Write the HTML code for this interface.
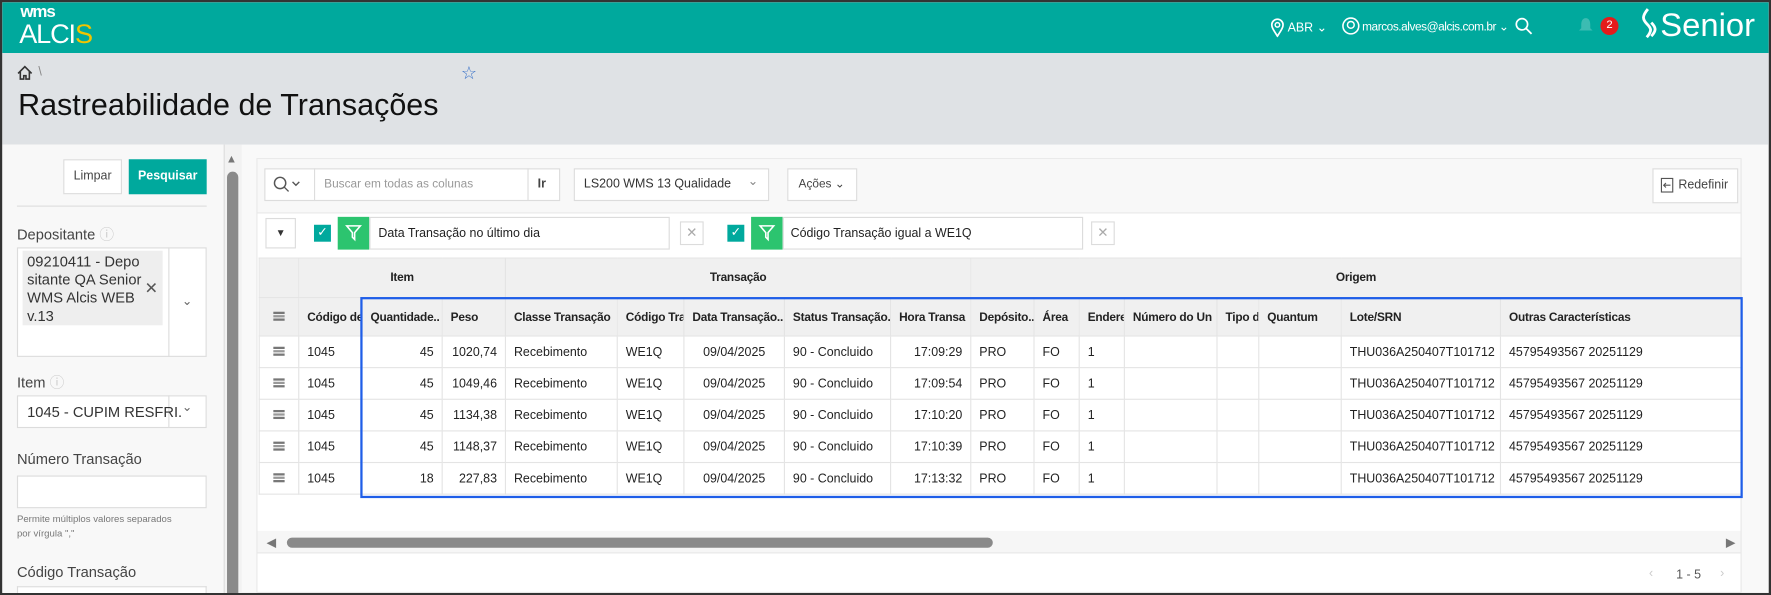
<!DOCTYPE html>
<html><head><meta charset="utf-8"><style>
*{box-sizing:border-box;margin:0;padding:0}
html,body{width:1771px;height:595px;overflow:hidden}
body{font-family:"Liberation Sans",sans-serif;background:#333;position:relative}
#sc{position:absolute;left:0;top:0;width:1568px;height:527px;transform:scale(1.12946);transform-origin:0 0;background:#333;overflow:hidden}
.a{position:absolute}
#pg{position:absolute;left:2px;top:2px;width:1564px;height:523px;background:#f9f9f9;overflow:hidden}
.hdr{left:0;top:0;width:1564px;height:45px;background:#00a99d}
.bc{left:0;top:45px;width:1564px;height:81px;background:#dfe2e5}
.lp{left:0;top:126px;width:210px;height:397px;background:#f8f8f8}
.t{font-size:11px;color:#222;white-space:nowrap}
.box{border:1px solid #dcdcdc;background:#fff}
table{border-collapse:collapse;position:absolute;left:227px;top:226px;width:1312px;table-layout:fixed;font-size:11px;color:#222}
td,th{border:1px solid #e4e4e4;height:28px;padding:0 7px;white-space:nowrap;overflow:hidden;text-align:left}
th{background:#f0f0f0;font-weight:bold;height:34px;font-size:10.5px;letter-spacing:-.2px}
tr.g th{text-align:center;height:35px}
td.r{text-align:right}td.c{text-align:center}
.mn{display:inline-block;width:10px;height:8px;border-top:2px solid #777;border-bottom:2px solid #777;position:relative}
.mn:after{content:"";position:absolute;left:0;right:0;top:1px;border-top:2px solid #999}
</style></head><body><div id="sc"><div id="pg">
<div class="a hdr"></div>
<div class="a" style="left:16px;top:0px;color:#fff;font-size:15px;font-weight:bold;letter-spacing:-1px">wms</div>
<div class="a" style="left:15px;top:15px;color:#fff;font-size:24px;letter-spacing:-1px">ALCI<span style="color:#f2c400">S</span></div>
<svg class="a" style="left:1122px;top:13px" width="14" height="18" viewBox="0 0 14 18"><path d="M7 17C3 11 2 9 2 7a5 5 0 0 1 10 0c0 2-1 4-5 10z" fill="none" stroke="#fff" stroke-width="1.5"/><circle cx="7" cy="7" r="2" fill="none" stroke="#fff" stroke-width="1.3"/></svg>
<div class="a t" style="left:1138px;top:16px;color:#fff;font-size:11px">ABR ⌄</div>
<svg class="a" style="left:1186px;top:13px" width="16" height="16" viewBox="0 0 16 16"><circle cx="8" cy="8" r="7" fill="none" stroke="#fff" stroke-width="1.4"/><circle cx="8" cy="7" r="3" fill="none" stroke="#fff" stroke-width="1.3"/></svg>
<div class="a t" style="left:1204px;top:16px;color:#fff;font-size:10.5px;letter-spacing:-.4px">marcos.alves@alcis.com.br ⌄</div>
<svg class="a" style="left:1339px;top:13px" width="16" height="16" viewBox="0 0 16 16"><circle cx="6.5" cy="6.5" r="5" fill="none" stroke="#fff" stroke-width="1.5"/><path d="M10 10l5 5" stroke="#fff" stroke-width="1.6"/></svg>
<svg class="a" style="left:1396px;top:13px" width="12" height="16" viewBox="0 0 12 16"><path d="M6 1c3 0 4 3 4 6v3l2 2H0l2-2V7c0-3 1-6 4-6zM4 14h4" fill="#3cbcb2"/></svg>
<div class="a" style="left:1415px;top:13px;width:16px;height:16px;border-radius:8px;background:#e41b1b;color:#fff;font-size:10px;text-align:center;line-height:16px">2</div>
<svg class="a" style="left:1448px;top:4px" width="20" height="40" viewBox="0 0 20 40"><path d="M9 2C4 8 4 11 8 15c4 4 5 6 0 12" fill="none" stroke="#fff" stroke-width="2.5"/><path d="M12 14c4 4 5 7 0 12" fill="none" stroke="#fff" stroke-width="2.5"/></svg>
<div class="a" style="left:1468px;top:5px;color:#fff;font-size:29px">Senior</div>
<div class="a bc"></div>
<svg class="a" style="left:13px;top:56px" width="14" height="13" viewBox="0 0 14 13"><path d="M1 7L7 1l6 6M3 5v7h3V9h2v3h3V5" fill="none" stroke="#333" stroke-width="1.4"/></svg>
<div class="a t" style="left:32px;top:56px;color:#888">\</div>
<div class="a" style="left:406px;top:53px;color:#3b73c9;font-size:16px">☆</div>
<div class="a" style="left:14px;top:76px;font-size:27px;color:#111">Rastreabilidade de Transações</div>
<div class="a lp"></div>
<div class="a box t" style="left:54px;top:139px;width:52px;height:31px;line-height:29px;text-align:center;color:#444">Limpar</div>
<div class="a t" style="left:112px;top:139px;width:69px;height:31px;line-height:31px;text-align:center;color:#fff;background:#00a99d;font-weight:bold">Pesquisar</div>
<div class="a" style="left:13px;top:180px;width:168px;border-top:1px solid #ddd"></div>
<div class="a t" style="left:13px;top:195px;font-size:13px;color:#444">Depositante <span style="color:#ccc">ⓘ</span></div>
<div class="a box" style="left:13px;top:217px;width:168px;height:97px"></div>
<div class="a" style="left:18px;top:220px;width:124px;height:66px;background:#eee"></div>
<div class="a" style="left:147px;top:217px;border-left:1px solid #ddd;height:97px"></div>
<div class="a" style="left:22px;top:222px;font-size:13px;color:#333;line-height:16px">09210411 - Depo<br>sitante QA Senior<br>WMS Alcis WEB<br>v.13</div>
<div class="a t" style="left:126px;top:245px;font-size:14px;color:#555">✕</div>
<div class="a t" style="left:159px;top:258px;color:#666">⌄</div>
<div class="a t" style="left:13px;top:326px;font-size:13px;color:#444">Item <span style="color:#ccc">ⓘ</span></div>
<div class="a box" style="left:13px;top:348px;width:168px;height:29px"></div>
<div class="a" style="left:147px;top:348px;border-left:1px solid #ddd;height:29px"></div>
<div class="a t" style="left:22px;top:355px;font-size:13px;color:#333">1045 - CUPIM RESFRI.</div>
<div class="a t" style="left:159px;top:352px;color:#666">⌄</div>
<div class="a t" style="left:13px;top:397px;font-size:13px;color:#444">Número Transação</div>
<div class="a box" style="left:13px;top:419px;width:168px;height:29px"></div>
<div class="a" style="left:13px;top:451px;font-size:8.5px;color:#777;line-height:13px">Permite múltiplos valores separados<br>por vírgula ","</div>
<div class="a t" style="left:13px;top:497px;font-size:13px;color:#444">Código Transação</div>
<div class="a box" style="left:13px;top:517px;width:168px;height:6px;border-bottom:none"></div>
<div class="a" style="left:196px;top:126px;width:16px;height:397px;background:#f2f2f2;border-left:1px solid #ddd"></div>
<div class="a" style="left:198px;top:134px;color:#777;font-size:10px">▲</div>
<div class="a" style="left:199px;top:150px;width:10px;height:373px;background:#8a8a8a;border-radius:5px 5px 0 0"></div>
<div class="a" style="left:225px;top:138px;width:1315px;height:385px;background:#fff;border:1px solid #e8e8e8"></div>
<div class="a" style="left:226px;top:139px;width:1313px;height:48px;background:#f8f8f8;border-bottom:1px solid #e8e8e8"></div>
<div class="a box" style="left:232px;top:147px;width:262px;height:29px"></div>
<div class="a" style="left:276px;top:147px;border-left:1px solid #ddd;height:29px"></div>
<div class="a" style="left:465px;top:147px;border-left:1px solid #ddd;height:29px"></div>
<svg class="a" style="left:239px;top:153px" width="28" height="16" viewBox="0 0 28 16"><circle cx="7" cy="7" r="5" fill="none" stroke="#555" stroke-width="1.3"/><path d="M10.5 10.5l4 4M18 6l3 3 3-3" fill="none" stroke="#555" stroke-width="1.2"/></svg>
<div class="a t" style="left:285px;top:155px;color:#999;font-size:10.5px">Buscar em todas as colunas</div>
<div class="a t" style="left:474px;top:155px;font-weight:bold;color:#444">Ir</div>
<div class="a box" style="left:506px;top:147px;width:173px;height:29px"></div>
<div class="a t" style="left:515px;top:155px;color:#333">LS200 WMS 13 Qualidade</div>
<div class="a t" style="left:660px;top:152px;color:#888">⌄</div>
<div class="a box t" style="left:695px;top:147px;width:62px;height:29px;line-height:27px;padding-left:9px;color:#444;font-size:10.5px">Ações ⌄</div>
<div class="a box t" style="left:1461px;top:147px;width:76px;height:31px;line-height:29px;padding-left:22px;color:#444">Redefinir</div>
<svg class="a" style="left:1468px;top:155px" width="12" height="14" viewBox="0 0 12 14"><rect x="1" y="1" width="10" height="12" fill="none" stroke="#555"/><path d="M9 7H3M5 5L3 7l2 2" fill="none" stroke="#555"/></svg>
<div class="a box" style="left:233px;top:191px;width:27px;height:27px;text-align:center;line-height:25px;font-size:9px;color:#333">▼</div>
<div class="a" style="left:276px;top:197px;width:15px;height:15px;background:#00a99d;color:#fff;font-size:11px;text-align:center;line-height:15px">✓</div>
<div class="a" style="left:297px;top:190px;width:28px;height:29px;background:#2cc46f"></div>
<svg class="a" style="left:303px;top:196px" width="16" height="16" viewBox="0 0 16 16"><path d="M2 2h12l-5 6v6l-2-2V8z" fill="none" stroke="#fff" stroke-width="1.4"/></svg>
<div class="a box" style="left:325px;top:190px;width:266px;height:29px"></div>
<div class="a t" style="left:333px;top:199px">Data Transação no último dia</div>
<div class="a box t" style="left:600px;top:194px;width:21px;height:21px;line-height:19px;text-align:center;color:#aaa;font-size:12px">✕</div>
<div class="a" style="left:642px;top:197px;width:15px;height:15px;background:#00a99d;color:#fff;font-size:11px;text-align:center;line-height:15px">✓</div>
<div class="a" style="left:663px;top:190px;width:28px;height:29px;background:#2cc46f"></div>
<svg class="a" style="left:669px;top:196px" width="16" height="16" viewBox="0 0 16 16"><path d="M2 2h12l-5 6v6l-2-2V8z" fill="none" stroke="#fff" stroke-width="1.4"/></svg>
<div class="a box" style="left:691px;top:190px;width:266px;height:29px"></div>
<div class="a t" style="left:698px;top:199px">Código Transação igual a WE1Q</div>
<div class="a box t" style="left:964px;top:194px;width:21px;height:21px;line-height:19px;text-align:center;color:#aaa;font-size:12px">✕</div>
<table>
<colgroup><col style="width:35px"><col style="width:56px"><col style="width:71px"><col style="width:56px"><col style="width:99px"><col style="width:59px"><col style="width:89px"><col style="width:94px"><col style="width:71px"><col style="width:56px"><col style="width:40px"><col style="width:40px"><col style="width:82px"><col style="width:37px"><col style="width:73px"><col style="width:141px"><col style="width:213px"></colgroup>
<tr class="g"><th></th><th colspan="3">Item</th><th colspan="5">Transação</th><th colspan="8">Origem</th></tr>
<tr><th style="text-align:center"><span class="mn"></span></th><th>Código de</th><th>Quantidade..</th><th>Peso</th><th>Classe Transação</th><th>Código Tra</th><th>Data Transação..</th><th>Status Transação.</th><th>Hora Transa</th><th>Depósito..</th><th>Área</th><th>Endere</th><th>Número do Un</th><th>Tipo d</th><th>Quantum</th><th>Lote/SRN</th><th>Outras Características</th></tr>
<tr><td class="c"><span class="mn"></span></td><td>1045</td><td class="r">45</td><td class="r">1020,74</td><td>Recebimento</td><td>WE1Q</td><td class="c">09/04/2025</td><td>90 - Concluido</td><td class="r">17:09:29</td><td>PRO</td><td>FO</td><td>1</td><td></td><td></td><td></td><td>THU036A250407T101712</td><td>45795493567 20251129</td></tr>
<tr><td class="c"><span class="mn"></span></td><td>1045</td><td class="r">45</td><td class="r">1049,46</td><td>Recebimento</td><td>WE1Q</td><td class="c">09/04/2025</td><td>90 - Concluido</td><td class="r">17:09:54</td><td>PRO</td><td>FO</td><td>1</td><td></td><td></td><td></td><td>THU036A250407T101712</td><td>45795493567 20251129</td></tr>
<tr><td class="c"><span class="mn"></span></td><td>1045</td><td class="r">45</td><td class="r">1134,38</td><td>Recebimento</td><td>WE1Q</td><td class="c">09/04/2025</td><td>90 - Concluido</td><td class="r">17:10:20</td><td>PRO</td><td>FO</td><td>1</td><td></td><td></td><td></td><td>THU036A250407T101712</td><td>45795493567 20251129</td></tr>
<tr><td class="c"><span class="mn"></span></td><td>1045</td><td class="r">45</td><td class="r">1148,37</td><td>Recebimento</td><td>WE1Q</td><td class="c">09/04/2025</td><td>90 - Concluido</td><td class="r">17:10:39</td><td>PRO</td><td>FO</td><td>1</td><td></td><td></td><td></td><td>THU036A250407T101712</td><td>45795493567 20251129</td></tr>
<tr><td class="c"><span class="mn"></span></td><td>1045</td><td class="r">18</td><td class="r">227,83</td><td>Recebimento</td><td>WE1Q</td><td class="c">09/04/2025</td><td>90 - Concluido</td><td class="r">17:13:32</td><td>PRO</td><td>FO</td><td>1</td><td></td><td></td><td></td><td>THU036A250407T101712</td><td>45795493567 20251129</td></tr>
</table>
<div class="a" style="left:317px;top:261px;width:1224px;height:178px;border:2px solid #1f5ee8"></div>
<div class="a" style="left:226px;top:468px;width:1313px;height:20px;background:#f6f6f6;border-bottom:1px solid #e8e8e8"></div>
<div class="a" style="left:234px;top:472px;color:#777;font-size:11px">◀</div>
<div class="a" style="left:252px;top:474px;width:625px;height:9px;background:#8a8a8a;border-radius:5px"></div>
<div class="a" style="left:1526px;top:472px;color:#777;font-size:11px">▶</div>
<div class="a t" style="left:1458px;top:500px;color:#ccc">‹</div>
<div class="a t" style="left:1482px;top:501px;color:#555">1 - 5</div>
<div class="a t" style="left:1521px;top:500px;color:#ccc">›</div>
</div></div></body></html>
